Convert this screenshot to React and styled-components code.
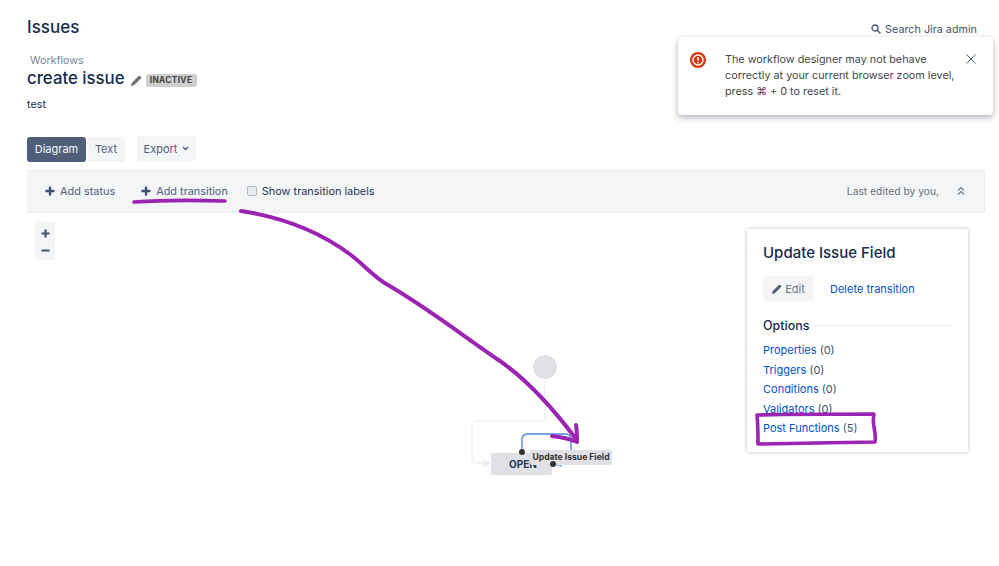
import React from "react";
import styled, { createGlobalStyle } from "styled-components";

const Global = createGlobalStyle`
  html, body { margin: 0; padding: 0; background: #fff; }
  body { font-family: Inter, "Liberation Sans", sans-serif; color: #172b4d; }
`;
const Page = styled.div`
  position: relative; width: 999px; height: 566px; overflow: hidden;
  padding: 16px 14px 0 27px; box-sizing: border-box;
  display: flex; flex-direction: column;
`;
const TopRow = styled.header`
  display: flex; justify-content: space-between; align-items: center; height: 23px;
`;
const PageTitle = styled.h1`margin: 0; font-size: 17px; font-weight: 500; line-height: 23px; color: #172b4d;`;
const SearchLink = styled.a`
  display: flex; align-items: center; gap: 4px; margin-right: 8px; margin-top: 3px;
  font-size: 10.8px; color: #42526e;
`;
const Crumb = styled.div`margin: 15px 0 0 3px; font-size: 10.7px; line-height: 14px; color: #7a869a;`;
const TitleRow = styled.div`display: flex; align-items: center; height: 22px; margin-top: -1px;`;
const WorkflowName = styled.h2`margin: 0; font-size: 16.8px; font-weight: 500; color: #172b4d; line-height: 22px;`;
const Badge = styled.span`
  margin-left: 4px; margin-top: 5px; height: 13px; width: 51px; border-radius: 3px; background: #cfcfcf; color: #404040;
  font-size: 8.3px; font-weight: 700; line-height: 13px; text-align: center; letter-spacing: .35px;
`;
const Description = styled.p`margin: 9px 0 0; font-size: 10.8px; line-height: 14px; color: #172b4d;`;
const TabRow = styled.div`display: flex; align-items: flex-start; margin-top: 25px;`;
const Tab = styled.button`
  height: 25px; border: 0; padding: 0 0 2px; margin: 0 1px 0 0; border-radius: 3px; width: ${p => p.$w}px;
  font: 400 11px Inter, sans-serif;
  background: ${p => (p.$active ? "#505f79" : "#f4f5f7")};
  color: ${p => (p.$active ? "#f4f5f7" : "#505f79")};
`;
const ExportButton = styled(Tab)`
  margin: -1px 0 0 11px; padding: 0; display: flex; align-items: center; justify-content: center; gap: 5px;
`;
const Toolbar = styled.div`
  margin-top: 8px; height: 43px; box-sizing: border-box; background: #f4f5f7;
  border: 1px solid #ebecf0; border-width: 1px 1px 1px 0; display: flex; align-items: center; padding: 0 19px 1px 18px;
  font-size: 10.9px; color: #505f79;
`;
const ToolAction = styled.span`display: flex; align-items: center; gap: 5px; margin-right: ${p => p.$gap}px;`;
const Check = styled.span`
  width: 8px; height: 8px; border: 1px solid #b3b9c4; border-radius: 2px; background: #ebecf0; margin-right: 5px;
`;
const CheckLabel = styled.span`color: #253858;`;
const Spacer = styled.span`flex: 1;`;
const Edited = styled.span`color: #6b6f76; font-size: 10.3px; margin-right: 18px;`;
const Canvas = styled.div`position: relative; flex: 1; margin-right: 0;`;
const ZoomBox = styled.div`
  position: absolute; left: 8px; top: 8px; width: 20px; height: 39px; background: #f4f5f7; border-radius: 2px;
  display: flex; flex-direction: column; align-items: center; justify-content: space-around;
  padding: 2px 0; box-sizing: border-box;
`;
const Panel = styled.aside`
  position: absolute; left: 720px; top: 16px; width: 221px; height: 223px; box-sizing: border-box; background: #fff;
  box-shadow: 0 0 4px rgba(9,30,66,.28); border-radius: 2px; padding: 14px 16px;
`;
const PanelTitle = styled.h3`margin: 0; font-size: 15px; font-weight: 500; line-height: 20px; color: #172b4d;`;
const PanelActions = styled.div`display: flex; align-items: center; margin-top: 13px; gap: 16px;`;
const EditButton = styled.span`
  width: 51px; height: 25px; background: #f4f5f7; border-radius: 3px; display: flex; align-items: center;
  justify-content: center; gap: 3px; font-size: 11px; color: #6b778c;
`;
const Link = styled.a`color: #0052cc; font-size: 11px;`;
const OptionsHead = styled.div`
  display: flex; align-items: center; gap: 4px; margin-top: 17px; font-size: 12.5px; font-weight: 500; color: #172b4d;
  &::after { content: ""; flex: 1; height: 1px; background: #ebecf0; }
`;
const OptionList = styled.ul`list-style: none; margin: 8px 0 0; padding: 0;`;
const Option = styled.li`height: 19.6px; line-height: 19.6px; font-size: 11px; color: #42526e;`;
const Node = styled.div`
  position: absolute; left: 464px; top: 240px; width: 61px; height: 22px; background: #dfe1e6; border-radius: 2px;
  font-size: 10px; font-weight: 700; color: #253858; line-height: 22px; padding-left: 18px; box-sizing: border-box; overflow: hidden;
`;
const StartNode = styled.div`
  position: absolute; left: 506px; top: 142px; width: 24px; height: 24px; border-radius: 50%; background: #dfe1e6;
`;
const EdgeLabel = styled.div`
  position: absolute; left: 503px; top: 237px; width: 82px; height: 15px; background: #dfe1e6; border-radius: 2px;
  font-size: 8.6px; font-weight: 700; color: #333; line-height: 15px; text-align: center; white-space: nowrap;
`;
const Dot = styled.span`
  position: absolute; left: ${p => p.$x}px; top: ${p => p.$y}px; width: 6px; height: 6px; border-radius: 50%; background: #333;
`;
const Edges = styled.svg`position: absolute; left: 0; top: 0; width: 100%; height: 100%;`;
const Flash = styled.div`
  position: absolute; left: 678px; top: 37px; width: 315px; height: 78px; box-sizing: border-box; background: #fff; border-radius: 3px;
  box-shadow: 0 3px 6px rgba(9,30,66,.3), 0 0 1px rgba(9,30,66,.2);
  display: flex; padding: 15px 17px 0 12px; gap: 19px;
`;
const FlashText = styled.p`margin: 0; flex: 1; font-size: 10.8px; line-height: 16px; color: #42464e;`;
const Ink = styled.svg`position: absolute; left: 0; top: 0; pointer-events: none;`;

const Plus = ({ size = 10, color = "#42526e" }) => (
  <svg width={size} height={size} viewBox="0 0 10 10">
    <path d="M5 .5v9M.5 5h9" stroke={color} strokeWidth="2.4" />
  </svg>
);

export default function App() {
  return (
    <Page>
      <Global />
      <TopRow>
        <PageTitle>Issues</PageTitle>
        <SearchLink>
          <svg width="10" height="10" viewBox="0 0 10 10" fill="none" stroke="#42526e" strokeWidth="1.3">
            <circle cx="4" cy="4" r="3" /><path d="M6.3 6.3 9.5 9.5" />
          </svg>
          Search Jira admin
        </SearchLink>
      </TopRow>
      <Crumb>Workflows</Crumb>
      <TitleRow>
        <WorkflowName>create issue</WorkflowName>
        <svg width="11" height="11" viewBox="0 0 11 11" style={{ marginLeft: 6, marginTop: 5 }}>
          <path d="M0 11l.7-3L7.6 1.1a1 1 0 0 1 1.4 0l.9.9a1 1 0 0 1 0 1.4L3 10.3z" fill="#707070" />
        </svg>
        <Badge>INACTIVE</Badge>
      </TitleRow>
      <Description>test</Description>
      <TabRow>
        <Tab $active $w={59}>Diagram</Tab>
        <Tab $w={38}>Text</Tab>
        <ExportButton $w={59}>
          Export
          <svg width="7" height="5" viewBox="0 0 7 5" fill="none" stroke="#505f79" strokeWidth="1.4"><path d="M1 1l2.5 2.5L6 1" /></svg>
        </ExportButton>
      </TabRow>
      <Toolbar>
        <ToolAction $gap={26}><Plus />Add status</ToolAction>
        <ToolAction $gap={19}><Plus />Add transition</ToolAction>
        <Check />
        <CheckLabel>Show transition labels</CheckLabel>
        <Spacer />
        <Edited>Last edited by you,</Edited>
        <svg width="8" height="10" viewBox="0 0 8 10" fill="none" stroke="#6b778c" strokeWidth="1.1"><path d="M1 4.5 4 1.5l3 3M1 8.5l3-3 3 3" /></svg>
      </Toolbar>
      <Canvas>
        <ZoomBox><Plus size={9} /><svg width="9" height="3" viewBox="0 0 9 3"><path d="M.5 1.5h8" stroke="#42526e" strokeWidth="2" /></svg></ZoomBox>
        <Edges>
          <path d="M518 167V204a4 4 0 0 1-4 4H449a4 4 0 0 0-4 4V246a4 4 0 0 0 4 4h8" fill="none" stroke="#ebecf0" strokeWidth="1.2" />
          <path d="M456 246l8 4-8 4z" fill="#ebecf0" />
          <path d="M495 238V226a5 5 0 0 1 5-5H539a5 5 0 0 1 5 5V238" fill="none" stroke="#4c86e0" strokeWidth="1.3" />
          <path d="M528 252h6v2" fill="none" stroke="#4c86e0" strokeWidth="1" />
        </Edges>
        <StartNode />
        <Node>OPEN</Node>
        <EdgeLabel>Update Issue Field</EdgeLabel>
        <Dot $x={492} $y={236} />
        <Dot $x={523} $y={248} />
        <Panel>
          <PanelTitle>Update Issue Field</PanelTitle>
          <PanelActions>
            <EditButton>
              <svg width="10" height="10" viewBox="0 0 11 11"><path d="M0 11l.7-3L7.6 1.1a1 1 0 0 1 1.4 0l.9.9a1 1 0 0 1 0 1.4L3 10.3z" fill="#505f79" /></svg>
              Edit
            </EditButton>
            <Link>Delete transition</Link>
          </PanelActions>
          <OptionsHead>Options</OptionsHead>
          <OptionList>
            <Option><Link>Properties</Link> (0)</Option>
            <Option><Link>Triggers</Link> (0)</Option>
            <Option><Link>Conditions</Link> (0)</Option>
            <Option><Link>Validators</Link> (0)</Option>
            <Option><Link>Post Functions</Link> (5)</Option>
          </OptionList>
        </Panel>
      </Canvas>
      <Flash>
        <svg width="16" height="16" viewBox="0 0 16 16" style={{ flex: "none" }}>
          <circle cx="8" cy="8" r="8" fill="#de350b" />
          <circle cx="8" cy="8" r="5" fill="none" stroke="#fff" strokeWidth="1.4" />
          <path d="M8 5v3.5" stroke="#fff" strokeWidth="1.6" />
          <circle cx="8" cy="10.6" r=".9" fill="#fff" />
        </svg>
        <FlashText>The workflow designer may not behave correctly at your current browser zoom level, press ⌘ + 0 to reset it.</FlashText>
        <svg width="10" height="10" viewBox="0 0 10 10" style={{ flex: "none", marginTop: 2, marginLeft: -9 }} fill="none" stroke="#505f79" strokeWidth="1">
          <path d="M.5.5l9 9M9.5.5l-9 9" />
        </svg>
      </Flash>
      <Ink width="999" height="566" fill="none" stroke="#9b24b2" strokeLinecap="round" strokeLinejoin="round">
        <path d="M134 202c28-2 60-2 91-1" strokeWidth="3.6" />
        <path d="M241 211c40 6 78 20 110 44c14 11 24 23 37 30c38 22 74 50 112 76c30 21 55 50 76 78" strokeWidth="4" />
        <path d="M552 436c10 1 18 3 25 6c0-6 0-12-1-17" strokeWidth="4" />
        <path d="M758 415c38-1 78-1 116-1c-1 5-1 8 0 13c1 6 2 10 1 15c-39 1-78 1-117 2c0-10 0-20-1-29" strokeWidth="3.6" />
      </Ink>
    </Page>
  );
}
